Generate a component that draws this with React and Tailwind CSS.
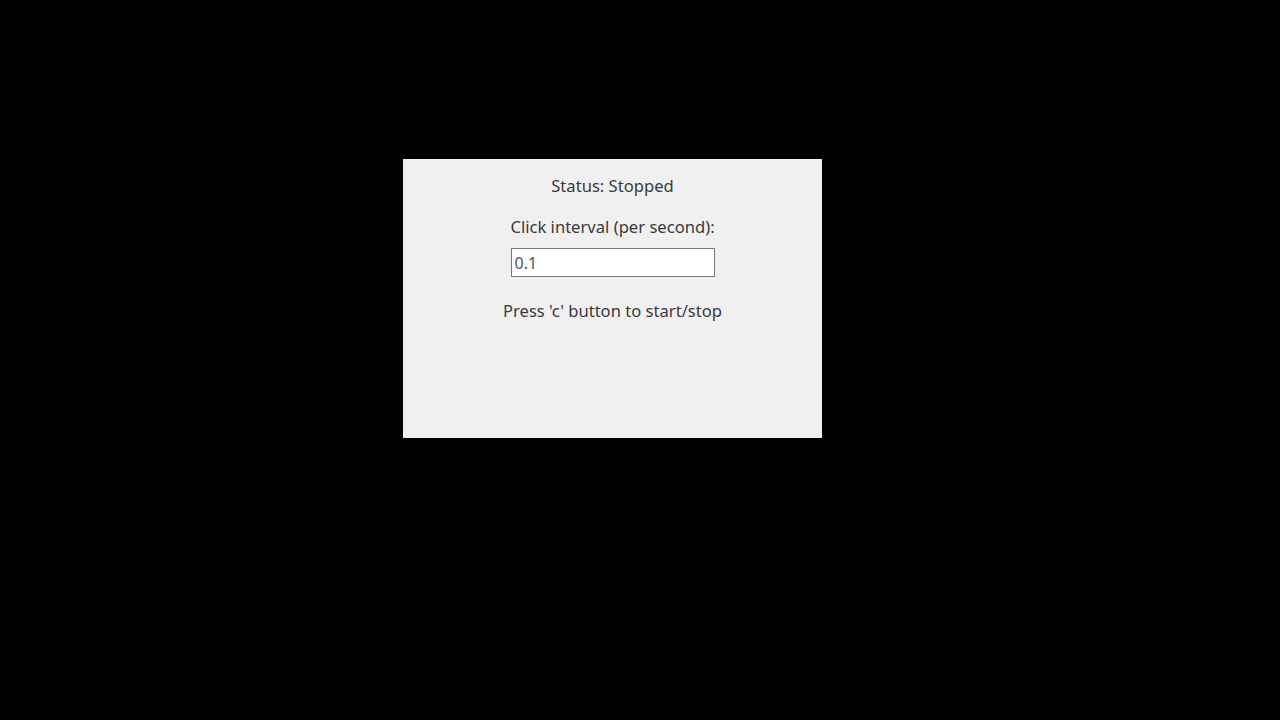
import React, { useState } from 'react'

function App() {
    const [interval, setIntervalValue] = useState('0.1')

    return (
        <div className="w-[1280px] h-[720px] bg-black overflow-hidden pt-[159px] pl-[403px]" style={{ fontFamily: '"Noto Sans", "Open Sans", sans-serif' }}>
            <div className="w-[419px] h-[279px] bg-[#f0f0f0] flex flex-col items-center pt-[15px] text-[#3a3a3a] text-[16.6px]">
                <p className="leading-[24px]">Status: Stopped</p>
                <p className="leading-[24px] mt-[17px]">Click interval (per second):</p>
                <input
                    className="mt-[9px] w-[204px] h-[29px] bg-white border border-[#7a7a7a] px-[3px] text-[#555555] text-[16px] outline-none"
                    value={interval}
                    onChange={(e) => setIntervalValue(e.target.value)}
                />
                <p className="leading-[24px] mt-[22px]">Press 'c' button to start/stop</p>
            </div>
        </div>
    )
}

export default App
